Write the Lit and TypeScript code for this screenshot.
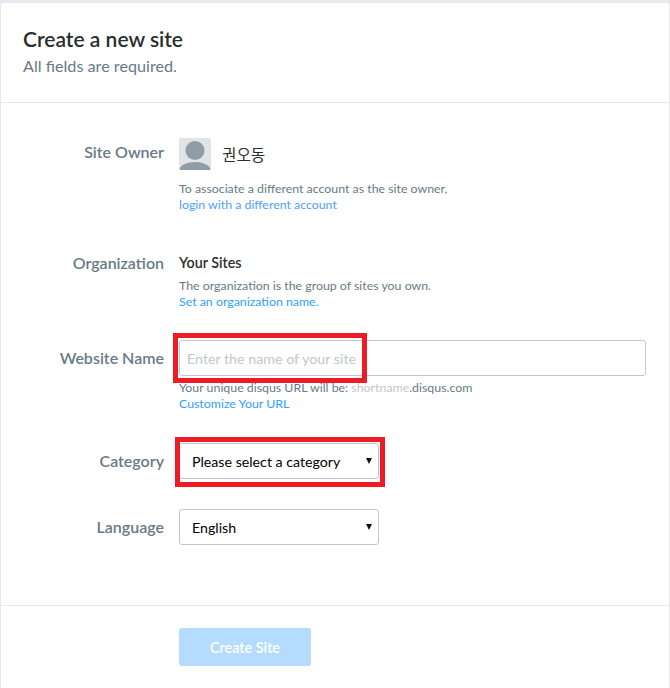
import { LitElement, html, css } from "lit";
import { customElement } from "lit/decorators.js";

@customElement("app-root")
export class AppRoot extends LitElement {
  static styles = css`
    :host {
      display: block;
      height: 688px;
      box-sizing: border-box;
      padding: 3px 1px 0 1px;
      background: #e7e9ef;
      font-family: Lato, "Noto Sans CJK KR", sans-serif;
      color: #2a2e2e;
      overflow: hidden;
    }
    .card {
      background: #fff;
      height: 685px;
      border-radius: 3px 3px 0 0;
      position: relative;
    }
    .head {
      height: 100px;
      box-sizing: border-box;
      padding: 22px 22px 0;
      border-bottom: 1px solid #e7e9ee;
    }
    h1 {
      margin: 0;
      font-size: 21px;
      line-height: 28px;
      font-weight: 600;
      color: #2a2e2e;
    }
    .sub {
      font-size: 16.2px;
      line-height: 22px;
      margin-top: 2px;
      color: #687a86;
    }
    .form {
      height: 503px;
      box-sizing: border-box;
      padding: 35px 23px 0 0;
      border-bottom: 1px solid #e7e9ee;
    }
    .row {
      display: grid;
      grid-template-columns: 163px 1fr;
      column-gap: 15px;
    }
    .owner { height: 111px; }
    .org { height: 91px; }
    .site { height: 103px; }
    .cat { height: 66px; }
    label {
      text-align: right;
      font-size: 16px;
      font-weight: 600;
      color: #687a86;
      line-height: 28px;
    }
    .owner label, .org label { line-height: 27px; }
    .site label, .cat label, .lang label { line-height: 36px; }
    .user {
      display: flex;
      align-items: center;
      gap: 11px;
      height: 32px;
      font-size: 15px;
    }
    .avatar {
      width: 32px;
      height: 32px;
      border-radius: 2px;
      display: block;
    }
    .name {
      font-family: "Noto Sans CJK KR", sans-serif;
      font-size: 15.7px;
    }
    .help {
      font-size: 12.35px;
      line-height: 16px;
      color: #687a86;
      margin-top: 11px;
    }
    .site .help { margin-top: 4px; }
    .org-name {
      font-size: 14.3px;
      font-weight: 600;
      line-height: 27px;
      color: #2a2e2e;
    }
    .org .help { margin-top: 2px; }
    a {
      color: #2e9fff;
      text-decoration: none;
    }
    .owner a { color: #4f9dff; }
    input {
      display: block;
      box-sizing: border-box;
      width: 100%;
      height: 36px;
      padding: 0 7px;
      border: 1px solid #c2c6cc;
      border-radius: 3px;
      font: 14.25px Lato, sans-serif;
      background: #fff;
      outline: none;
    }
    input::placeholder {
      color: #c2c6cc;
      opacity: 1;
    }
    .faint { color: #c2c6cc; }
    .sel {
      position: relative;
      width: 200px;
      height: 36px;
    }
    select {
      appearance: none;
      display: block;
      box-sizing: border-box;
      width: 100%;
      height: 36px;
      padding: 0 12px;
      border: 1px solid #c2c6cc;
      border-radius: 3px;
      background: #fff;
      color: #000;
      font: 14.2px Lato, sans-serif;
      outline: none;
    }
    .arrow {
      position: absolute;
      right: 7px;
      top: 15px;
      width: 0;
      height: 0;
      border-left: 3px solid transparent;
      border-right: 3px solid transparent;
      border-top: 6px solid #111;
      pointer-events: none;
    }
    .foot { padding: 22px 0 0 178px; }
    button {
      display: block;
      width: 132px;
      height: 38px;
      border: 0;
      border-radius: 3px;
      background: #b5dbff;
      color: #fff;
      font: 600 14.4px Lato, sans-serif;
    }
    .mark {
      position: absolute;
      box-sizing: border-box;
      border: 5px solid #ed1c24;
      pointer-events: none;
    }
    .mark1 { left: 172px; top: 330px; width: 194px; height: 50px; }
    .mark2 { left: 174px; top: 434px; width: 210px; height: 50px; }
  `;

  render() {
    return html`
      <div class="card">
        <div class="head">
          <h1>Create a new site</h1>
          <div class="sub">All fields are required.</div>
        </div>
        <div class="form">
          <div class="row owner">
            <label>Site Owner</label>
            <div>
              <div class="user">
                <svg class="avatar" viewBox="0 0 32 32">
                  <rect width="32" height="32" fill="#e0e4e7" />
                  <circle cx="16" cy="12.5" r="9.5" fill="#919ca6" />
                  <path d="M0 32c1-5 8-8 16-8s15 3 16 8z" fill="#919ca6" />
                </svg>
                <span class="name">권오동</span>
              </div>
              <div class="help">
                To associate a different account as the site owner,<br />
                <a href="#">login with a different account</a>
              </div>
            </div>
          </div>
          <div class="row org">
            <label>Organization</label>
            <div>
              <div class="org-name">Your Sites</div>
              <div class="help">
                The organization is the group of sites you own.<br />
                <a href="#">Set an organization name.</a>
              </div>
            </div>
          </div>
          <div class="row site">
            <label>Website Name</label>
            <div>
              <input type="text" placeholder="Enter the name of your site" />
              <div class="help">
                Your unique disqus URL will be: <span class="faint">shortname</span>.disqus.com<br />
                <a href="#">Customize Your URL</a>
              </div>
            </div>
          </div>
          <div class="row cat">
            <label>Category</label>
            <div class="sel">
              <select><option>Please select a category</option></select>
              <span class="arrow"></span>
            </div>
          </div>
          <div class="row lang">
            <label>Language</label>
            <div class="sel">
              <select><option>English</option></select>
              <span class="arrow"></span>
            </div>
          </div>
        </div>
        <div class="foot"><button>Create Site</button></div>
        <div class="mark mark1"></div>
        <div class="mark mark2"></div>
      </div>
    `;
  }
}
